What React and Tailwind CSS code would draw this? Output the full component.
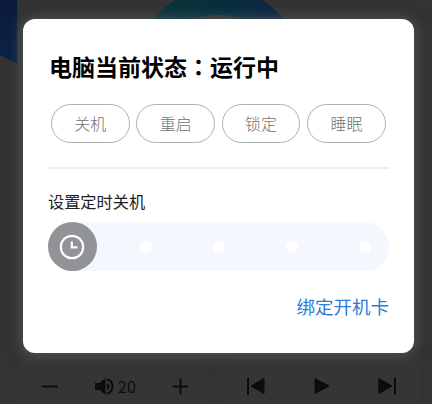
const actions = ["关机", "重启", "锁定", "睡眠"];

const steps = [1, 2, 3, 4];

function Backdrop() {
  return (
    <svg
      className="absolute inset-0"
      width="432"
      height="404"
      viewBox="0 0 432 404"
    >
      <defs>
        <linearGradient id="ring" x1="0" y1="0" x2="1" y2="0">
          <stop offset="0" stopColor="#08343b" />
          <stop offset="0.45" stopColor="#06303a" />
          <stop offset="0.75" stopColor="#0a2a42" />
          <stop offset="1" stopColor="#10204a" />
        </linearGradient>
        <linearGradient id="card" x1="0" y1="0" x2="0" y2="1">
          <stop offset="0" stopColor="#0b1b3b" />
          <stop offset="1" stopColor="#0d2248" />
        </linearGradient>
      </defs>
      <path d="M0 0H17V63.5L0 55Z" fill="url(#card)" />
      <circle cx="218.5" cy="72" r="70.5" fill="none" stroke="url(#ring)" strokeWidth="27" />
    </svg>
  );
}

function VolumePanel() {
  return (
    <div className="w-[190px] h-[47px] pt-[7px] rounded-t-xl bg-[#353535] text-[#0c0c0c] flex items-start">
      <svg className="ml-[24px] mt-[13px]" width="18" height="20" viewBox="0 0 18 20">
        <path d="M1.7 9.5H16" stroke="currentColor" strokeWidth="2" strokeLinecap="round" />
      </svg>
      <svg className="ml-[36px] mt-[14px]" width="20" height="18" viewBox="0 0 20 18">
        <path d="M0 5H4.5L10.5 0V17L4.5 12H0Z" fill="currentColor" />
        <path d="M12 5Q14.5 6 14.5 8.5T12 12Z" fill="currentColor" />
        <path d="M12 1.5A7.2 7.2 0 0 1 12 15.5" fill="none" stroke="currentColor" strokeWidth="2" />
      </svg>
      <span className="ml-[3px] mt-[10px] w-[20px] text-base leading-6">20</span>
      <svg className="ml-[34px] mt-[13px]" width="18" height="20" viewBox="0 0 18 20">
        <path d="M1.5 9.5H15.5M8.5 2.5V16.5" stroke="currentColor" strokeWidth="2" strokeLinecap="round" />
      </svg>
    </div>
  );
}

function PlayerPanel() {
  return (
    <div className="w-[197px] h-[47px] px-[23px] pt-[20px] rounded-t-xl bg-[#353535] text-[#0c0c0c] flex items-start justify-between">
      <svg width="19" height="18" viewBox="0 0 19 18">
        <path d="M1 0.8H3V17.8H1Z" fill="currentColor" />
        <path d="M5 9L18 1.5V16.5Z" fill="currentColor" stroke="currentColor" strokeLinejoin="round" />
      </svg>
      <svg className="ml-px" width="17" height="18" viewBox="0 0 17 18">
        <path d="M1 1.5V16.5L15 9Z" fill="currentColor" stroke="currentColor" strokeLinejoin="round" />
      </svg>
      <svg width="19" height="18" viewBox="0 0 19 18">
        <path d="M16 0.8H18V17.8H16Z" fill="currentColor" />
        <path d="M0.8 1.5V16.5L14 9Z" fill="currentColor" stroke="currentColor" strokeLinejoin="round" />
      </svg>
    </div>
  );
}

function TimerSlider() {
  return (
    <div className="mt-[9px] h-[49px] w-[341px] rounded-full bg-[#f4f7fd] flex items-center">
      <div className="size-[49px] rounded-full bg-[#919396] text-white flex items-center justify-center">
        <svg className="-ml-px" width="26" height="26" viewBox="0 0 26 26" fill="none" stroke="currentColor">
          <circle cx="13" cy="13" r="11.2" strokeWidth="2.2" />
          <path d="M12.8 7.5V13.3H18.5" strokeWidth="2.2" />
        </svg>
      </div>
      <div className="ml-[42.6px] flex gap-[61.1px]">
        {steps.map((step) => (
          <span key={step} className="size-[12px] rounded-full bg-white" />
        ))}
      </div>
    </div>
  );
}

function StatusDialog() {
  return (
    <div className="absolute left-[23px] top-[19px] w-[391px] h-[334px] rounded-xl bg-white pl-[25px] shadow-[0_1px_14px_#585f63]">
      <h2 className="pt-[30px] pl-px text-[23px] leading-[34px] font-bold text-black">
        电脑当前状态
        <span className="font-['Noto_Sans_CJK_TC',sans-serif]" lang="zh-TW">
          {"\uFF1A"}
        </span>
        运行中
      </h2>

      <div className="mt-[21px] ml-[3px] flex gap-[6.7px]">
        {actions.map((action) => (
          <button
            key={action}
            className="w-[78.7px] h-[39px] pb-[2px] rounded-full border border-[#b0b0b0] text-base font-light text-[#707070]"
          >
            {action}
          </button>
        ))}
      </div>

      <div className="mt-[24px] h-[2px] w-[341px] bg-[#eeeeee]" />

      <p className="mt-[20px] text-[16.2px] leading-6 text-[#222222]">
        设置定时关机
      </p>
      <TimerSlider />

      <div className="mt-[21px] w-[341px] text-right text-[18.5px] leading-7 text-[#2d7bdc]">
        绑定开机卡
      </div>
    </div>
  );
}

function App() {
  return (
    <div className="relative w-[432px] h-[404px] overflow-hidden bg-[#333333] font-['Noto_Sans_CJK_SC',sans-serif]">
      <Backdrop />
      <div className="relative pt-[357px] pl-[17px] flex gap-4">
        <VolumePanel />
        <PlayerPanel />
      </div>
      <StatusDialog />
    </div>
  );
}

export default App;
